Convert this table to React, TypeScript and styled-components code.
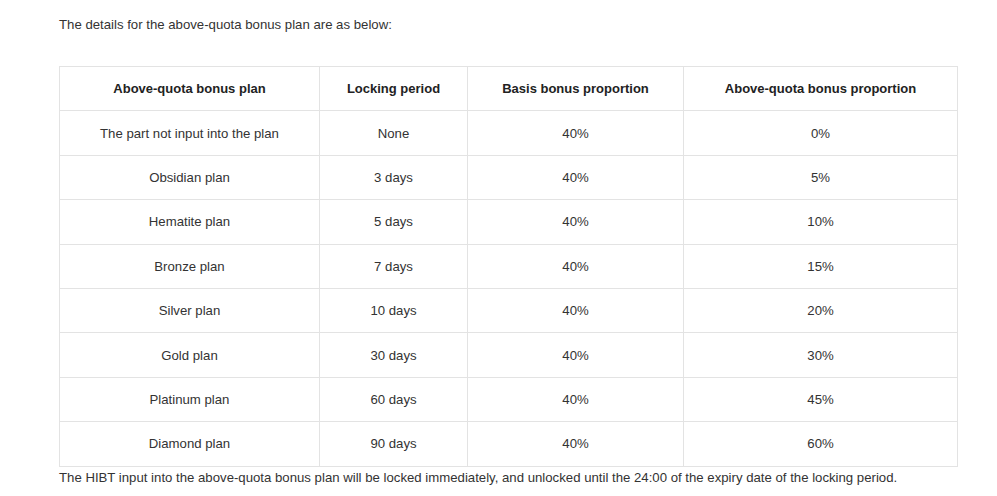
import React from "react";
import styled, { createGlobalStyle } from "styled-components";

const Global = createGlobalStyle`
  html, body { margin: 0; padding: 0; background: #fff; }
  body { font-family: "Liberation Sans", Arial, sans-serif; color: #333; }
`;

const Page = styled.div`
  padding: 16px 40px 0 59px;
  width: 898px;
`;

const Para = styled.p<{ $gap?: number }>`
  margin: ${(p) => p.$gap ?? 0}px 0 0;
  font-size: 13.2px;
  line-height: 18px;
`;

const Table = styled.table`
  margin-top: 32px;
  width: 898px;
  border-collapse: collapse;
  table-layout: fixed;
  font-size: 13.2px;
`;

const Cell = styled.td<{ $head?: boolean }>`
  border: 1px solid #e3e3e3;
  text-align: center;
  vertical-align: middle;
  height: 43.4px;
  padding: 0;
  font-size: ${(p) => (p.$head ? "13px" : "13.2px")};
  font-weight: ${(p) => (p.$head ? 700 : 400)};
  color: ${(p) => (p.$head ? "#222" : "#333")};
`;

const rows = [
  ["The part not input into the plan", "None", "40%", "0%"],
  ["Obsidian plan", "3 days", "40%", "5%"],
  ["Hematite plan", "5 days", "40%", "10%"],
  ["Bronze plan", "7 days", "40%", "15%"],
  ["Silver plan", "10 days", "40%", "20%"],
  ["Gold plan", "30 days", "40%", "30%"],
  ["Platinum plan", "60 days", "40%", "45%"],
  ["Diamond plan", "90 days", "40%", "60%"],
];

const widths = [260, 148, 216, 274];

export default function App() {
  return (
    <Page>
      <Global />
      <Para>The details for the above-quota bonus plan are as below:</Para>
      <Table>
        <colgroup>
          {widths.map((w, i) => (
            <col key={i} style={{ width: w }} />
          ))}
        </colgroup>
        <thead>
          <tr>
            {["Above-quota bonus plan", "Locking period", "Basis bonus proportion", "Above-quota bonus proportion"].map((h) => (
              <Cell as="th" $head key={h}>
                {h}
              </Cell>
            ))}
          </tr>
        </thead>
        <tbody>
          {rows.map((r) => (
            <tr key={r[0]}>
              {r.map((c, i) => (
                <Cell key={i}>{c}</Cell>
              ))}
            </tr>
          ))}
        </tbody>
      </Table>
      <Para $gap={2}>
        The HIBT input into the above-quota bonus plan will be locked immediately, and unlocked until the 24:00 of the expiry date of the locking period.
      </Para>
    </Page>
  );
}
